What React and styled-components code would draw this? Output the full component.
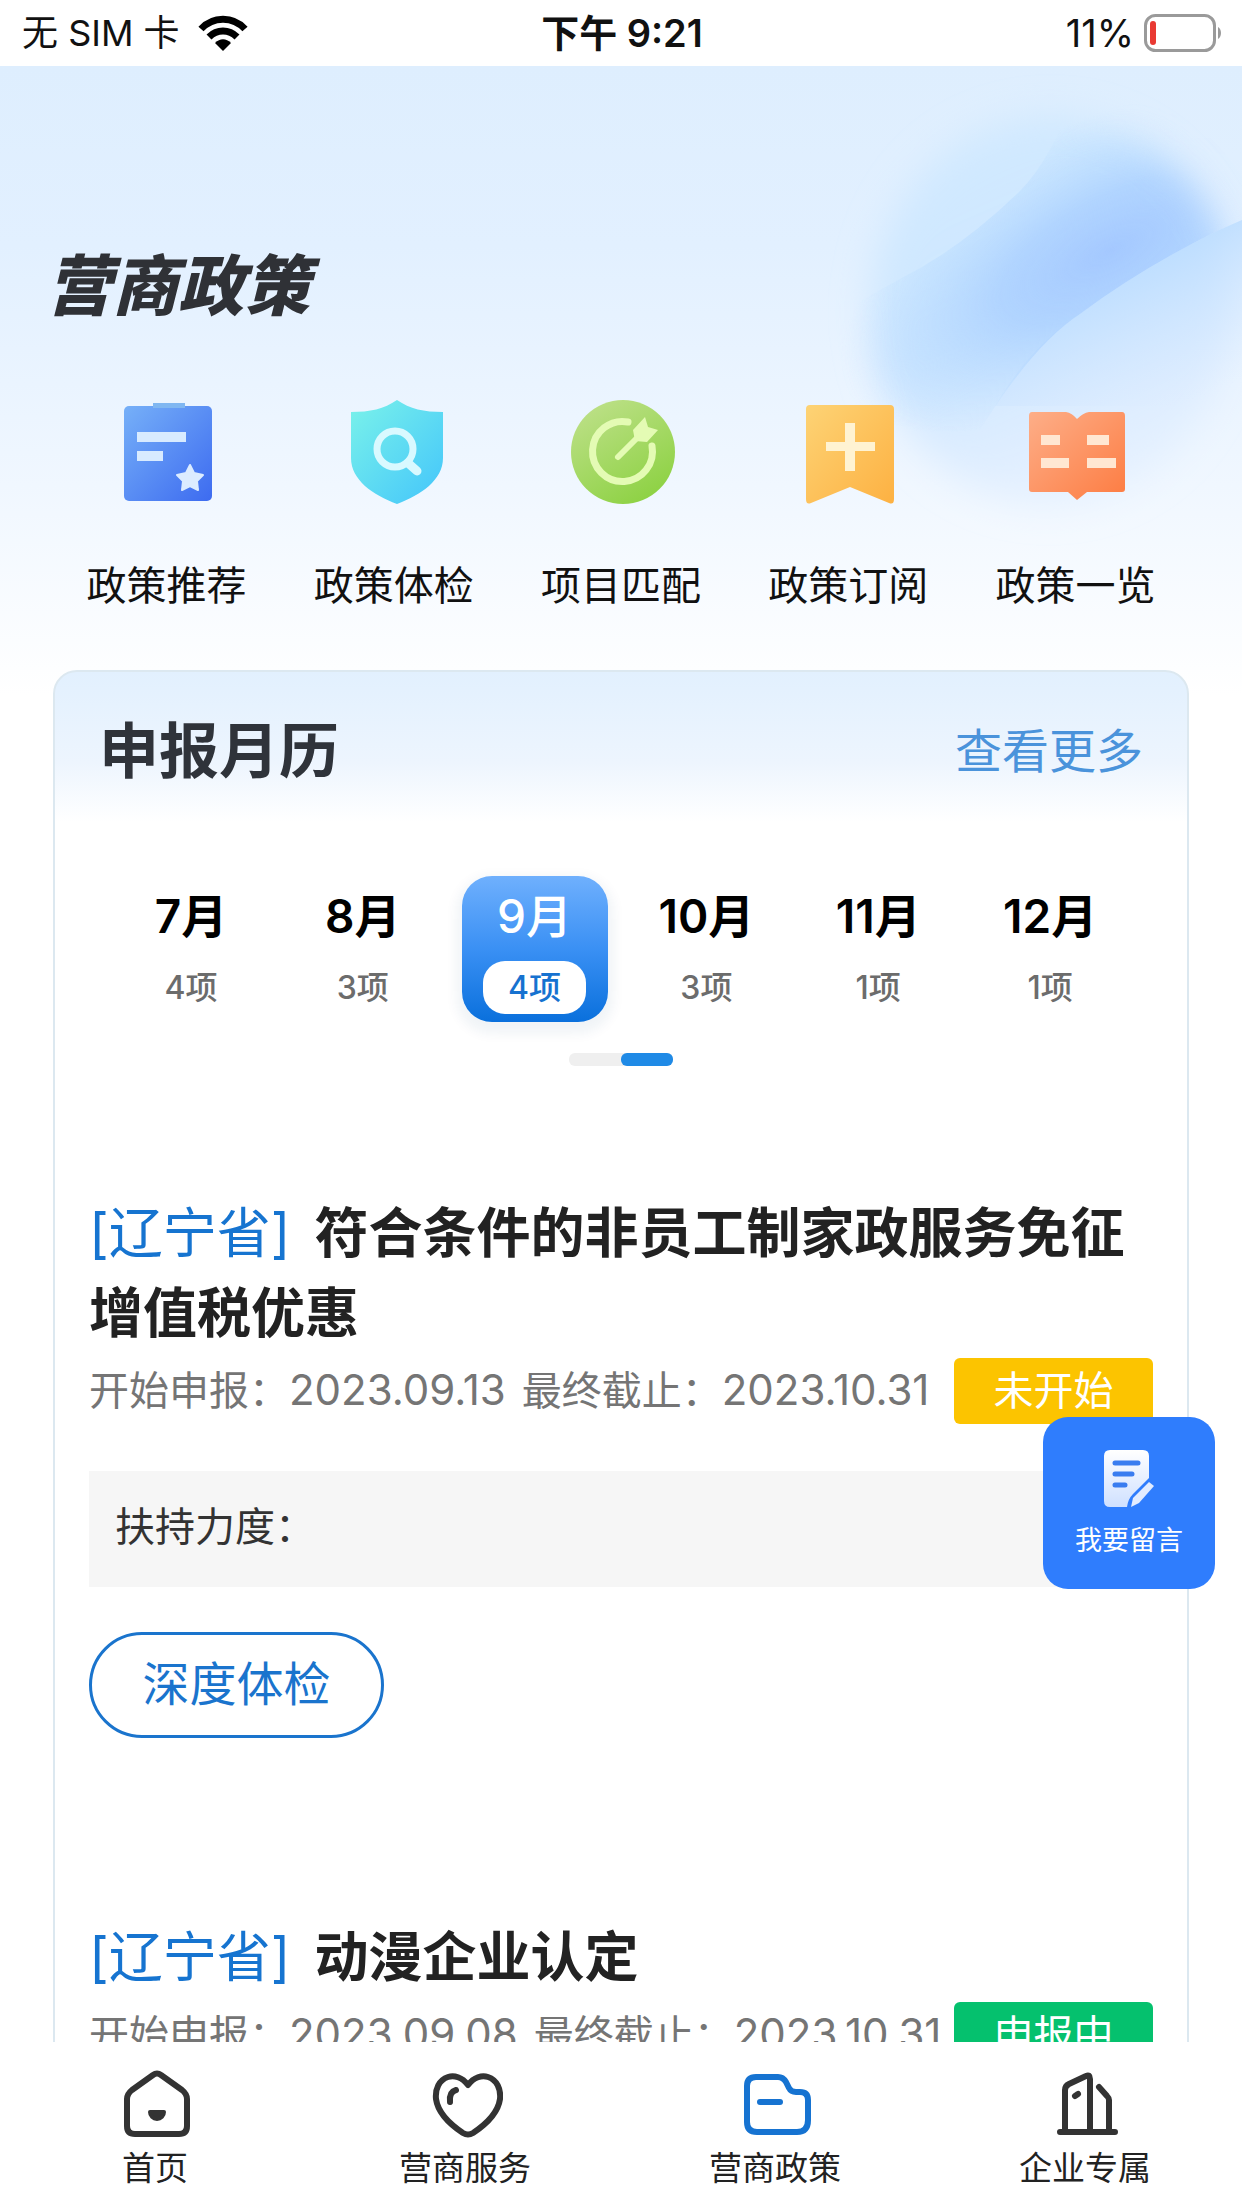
import React, { useState } from "react";
import styled, { createGlobalStyle } from "styled-components";

const GlobalStyle = createGlobalStyle`
  * {
    box-sizing: border-box;
  }

  body {
    margin: 0;
    background: #fff;
    font-family: Inter, "Noto Sans CJK SC", sans-serif;
    color: #111;
  }

  button {
    padding: 0;
    border: none;
    background: none;
    font-family: inherit;
    color: inherit;
    cursor: pointer;
  }

  a {
    color: inherit;
    text-decoration: none;
  }
`;

const Page = styled.div`
  height: 100vh;
  display: flex;
  flex-direction: column;
  overflow: hidden;
`;

/* 상태 표시줄 */
const StatusBar = styled.header`
  flex: none;
  height: 66px;
  padding: 0 20px 0 22px;
  display: grid;
  grid-template-columns: 1fr auto 1fr;
  align-items: center;
  background: #fff;
  font-size: 38px;
  line-height: 66px;
`;

const StatusSide = styled.div`
  display: flex;
  align-items: center;
  justify-content: ${(props) => (props.$end ? "flex-end" : "flex-start")};
  gap: ${(props) => (props.$end ? "10px" : "18px")};
`;

const Carrier = styled.span`
  font-size: 36px;
`;

const StatusTime = styled.div`
  font-weight: 600;
`;

const Content = styled.main`
  flex: 1;
  min-height: 0;
  overflow-y: auto;
  position: relative;
  background: linear-gradient(
    180deg,
    #deeefe 0px,
    #e2f0ff 180px,
    #f0f7ff 420px,
    #ffffff 630px
  );
  scrollbar-width: none;
`;

const HeroArt = styled.svg`
  position: absolute;
  top: 0;
  right: 0;
  width: 462px;
  height: 560px;
  pointer-events: none;
`;

const PageTitle = styled.h1`
  position: relative;
  margin: 0;
  padding: 170px 46px 0;
  font-size: 66px;
  line-height: 100px;
  font-weight: 900;
  font-style: italic;
  color: #2f3136;
`;

const Menu = styled.nav`
  position: relative;
  padding: 60px 53px 0;
  display: grid;
  grid-template-columns: repeat(5, 1fr);
`;

const MenuItem = styled.a`
  display: flex;
  flex-direction: column;
  align-items: center;
  gap: 48px;
  font-size: 40px;
  line-height: 60px;

  svg {
    width: 112px;
    height: 112px;
  }
`;

const Card = styled.section`
  position: relative;
  margin: 54px 53px 0;
  border: 2px solid #dce8f0;
  border-radius: 24px;
  background: linear-gradient(180deg, #e2f0fe 0px, #edf5fe 90px, #fff 150px);
`;

const CardHead = styled.div`
  padding: 31px 44px 1px;
  display: flex;
  justify-content: space-between;
  align-items: center;
`;

const CardTitle = styled.h2`
  margin: 0;
  font-size: 60px;
  line-height: 96px;
  font-weight: 600;
  color: #2f333a;
`;

const MoreLink = styled.a`
  font-size: 47px;
  line-height: 60px;
  color: #4a93db;
`;

const Months = styled.div`
  padding: 76px 51px 0 50px;
  display: grid;
  grid-template-columns: repeat(6, 1fr);
`;

const MonthButton = styled.button`
  justify-self: center;
  width: 146px;
  height: 146px;
  padding-top: 10px;
  border-radius: 30px;
  display: flex;
  flex-direction: column;
  align-items: center;
  gap: 14px;
  background: ${(props) =>
    props.$active
      ? "linear-gradient(180deg, #6fb0fd 0%, #3a90f4 50%, #0a70dc 100%)"
      : "transparent"};
  box-shadow: ${(props) =>
    props.$active ? "0 6px 12px 6px rgba(0, 60, 120, 0.06)" : "none"};
  color: ${(props) => (props.$active ? "#fff" : "#000")};
`;

const MonthName = styled.span`
  font-size: 46px;
  line-height: 61px;
  font-weight: ${(props) => (props.$active ? 500 : 600)};
`;

const MonthCount = styled.span`
  width: 103px;
  border-radius: 22px;
  font-size: 32px;
  line-height: 53px;
  font-weight: 500;
  background: ${(props) => (props.$active ? "#fff" : "transparent")};
  color: ${(props) => (props.$active ? "#1672d0" : "#6c6c6c")};
`;

const Indicator = styled.div`
  width: 104px;
  height: 13px;
  margin: 31px auto 0;
  display: flex;
  justify-content: flex-end;
  background: #efefef;
  border-radius: 6px;

  span {
    width: 52px;
    border-radius: 6px;
    background: #1f8ae6;
  }
`;

const PolicyList = styled.div`
  padding: 128px 34px 120px;
  display: flex;
  flex-direction: column;
  gap: 180px;
`;

const PolicyTitle = styled.h3`
  margin: 0;
  font-size: 54px;
  line-height: 80px;
  font-weight: 600;
  color: #222;
`;

const Region = styled.span`
  margin-right: 24px;
  font-weight: 400;
  color: #1674d0;
`;

const PolicyMeta = styled.div`
  margin-top: 3px;
  display: flex;
  align-items: center;
  justify-content: space-between;
  white-space: nowrap;
  font-size: 40px;
  line-height: 66px;
  color: #757575;
`;

const Dates = styled.div`
  display: flex;
  gap: 16px;
`;

const DateValue = styled.time`
  font-size: 42px;
`;

const StatusTag = styled.span`
  width: 199px;
  height: 66px;
  border-radius: 6px;
  text-align: center;
  color: #fff;
  background: ${(props) => (props.$open ? "#05c16e" : "#fcc400")};
`;

const Support = styled.div`
  margin-top: 47px;
  padding: 0 26px 4px;
  font-size: 40px;
  line-height: 112px;
  background: #f6f6f6;
  color: #333;
`;

const CheckButton = styled.button`
  margin-top: 45px;
  width: 295px;
  height: 106px;
  padding-bottom: 2px;
  border: 3px solid #1a74cd;
  border-radius: 53px;
  font-size: 47px;
  line-height: 60px;
  color: #1a74cd;
`;

const MessageButton = styled.button`
  position: fixed;
  right: 27px;
  bottom: 619px;
  width: 172px;
  height: 172px;
  border-radius: 25px;
  display: flex;
  flex-direction: column;
  align-items: center;
  padding-top: 32px;
  gap: 14px;
  background: #2f7dfd;
  color: #fff;
  font-size: 27px;
  line-height: 40px;
`;

const TabBar = styled.nav`
  flex: none;
  padding: 24px 2px 18px 0;
  display: grid;
  grid-template-columns: repeat(4, 1fr);
  background: #fff;
`;

const Tab = styled.a`
  display: flex;
  flex-direction: column;
  align-items: center;
  gap: 4px;
  font-size: 33px;
  line-height: 44px;
  color: #222;

  svg {
    width: 76px;
    height: 76px;
    fill: none;
    stroke: ${(props) => (props.$active ? "#1673d1" : "#333")};
    stroke-width: 6;
    stroke-linecap: round;
    stroke-linejoin: round;
  }
`;

const WifiIcon = () => (
  <svg width="50" height="36" viewBox="0 0 50 36" aria-hidden="true">
    <g fill="none" stroke="#000" strokeWidth="7">
      <path d="M3 14 C15 1 35 1 47 14" />
      <path d="M11 22 C19 14 31 14 39 22" />
    </g>
    <path d="M17 28 C22 23 28 23 33 28 L25 36 Z" />
  </svg>
);

const BatteryIcon = () => (
  <svg width="78" height="38" viewBox="0 0 78 38" aria-hidden="true">
    <rect x="1.5" y="1.5" width="69" height="35" rx="10" fill="#fff" stroke="#9a9a9a" strokeWidth="3" />
    <rect x="6" y="7" width="6" height="24" rx="3" fill="#e93a33" />
    <path d="M74 13 C78 15 78 23 74 25 Z" fill="#9a9a9a" />
  </svg>
);

const HeroOrb = () => (
  <HeroArt viewBox="0 0 462 560" aria-hidden="true">
    <defs>
      <filter id="soft" x="-30%" y="-30%" width="160%" height="160%">
        <feGaussianBlur stdDeviation="18" />
      </filter>
      <linearGradient id="orb" x1="0.3" y1="0" x2="0.7" y2="1">
        <stop offset="0" stopColor="#cbe7ff" stopOpacity="0.7" />
        <stop offset="0.5" stopColor="#c8e4ff" stopOpacity="0.8" />
        <stop offset="1" stopColor="#d8e8ff" stopOpacity="0.3" />
      </linearGradient>
      <radialGradient
        id="glow"
        gradientUnits="userSpaceOnUse"
        cx="0"
        cy="0"
        r="1"
        gradientTransform="translate(330 185) rotate(-28) scale(300 130)"
      >
        <stop offset="0" stopColor="#a4c8ff" />
        <stop offset="0.4" stopColor="#a9cfff" stopOpacity="0.8" />
        <stop offset="1" stopColor="#b5dcff" stopOpacity="0" />
      </radialGradient>
      <linearGradient id="lower" gradientUnits="userSpaceOnUse" x1="340" y1="200" x2="400" y2="340">
        <stop offset="0" stopColor="#b8dbff" stopOpacity="0.8" />
        <stop offset="1" stopColor="#d8e8ff" stopOpacity="0" />
      </linearGradient>
      <mask id="round" maskUnits="userSpaceOnUse" x="0" y="0" width="462" height="560">
        <ellipse cx="268" cy="255" rx="190" ry="205" fill="#fff" filter="url(#soft)" />
      </mask>
      <clipPath id="band">
        <path d="M300 20 Q270 95 240 125 Q180 183 120 213 Q70 240 20 270 L20 420 L190 380 Q250 280 300 248 Q360 203 437 165 L462 154 V20 Z" />
      </clipPath>
    </defs>
    <ellipse cx="270" cy="245" rx="180" ry="195" fill="url(#orb)" filter="url(#soft)" />
    <path d="M215 340 Q250 280 300 248 Q360 203 437 165 L462 154 V340 Z" fill="url(#lower)" />
    <g mask="url(#round)">
      <rect width="462" height="560" fill="url(#glow)" clipPath="url(#band)" />
    </g>
  </HeroArt>
);

const RecommendIcon = () => (
  <svg viewBox="0 0 112 112" aria-hidden="true">
    <defs>
      <linearGradient id="recommend" x1="0" y1="0" x2="1" y2="1">
        <stop offset="0" stopColor="#76b0f8" />
        <stop offset="1" stopColor="#3d6bf0" />
      </linearGradient>
    </defs>
    <rect x="13" y="10" width="88" height="95" rx="5" fill="url(#recommend)" />
    <path d="M42 7 H74 V12 H42 Z" fill="#80b7f1" />
    <path d="M26 36 H75 V46 H26 Z M26 55 H52 V65 H26 Z" fill="#d8ebff" />
    <path
      d="M79 69 L83 77 L92 79 L86 85 L87 94 L79 90 L71 94 L72 85 L66 79 L75 77 Z"
      fill="#dcecff"
      stroke="#dcecff"
      strokeWidth="2"
      strokeLinejoin="round"
    />
  </svg>
);

const CheckupIcon = () => (
  <svg viewBox="0 0 112 112" aria-hidden="true">
    <defs>
      <linearGradient id="checkup" x1="0" y1="0" x2="1" y2="1">
        <stop offset="0" stopColor="#7af2ea" />
        <stop offset="1" stopColor="#43c5fb" />
      </linearGradient>
    </defs>
    <path
      d="M59 4 C72 13 86 16 105 16 V62 C105 84 83 99 59 108 C35 99 13 84 13 62 V16 C32 16 46 13 59 4 Z"
      fill="url(#checkup)"
    />
    <circle cx="57" cy="53" r="18" fill="none" stroke="#d9f9ff" strokeWidth="7" />
    <path d="M70 67 L79 75" stroke="#d9f9ff" strokeWidth="9" strokeLinecap="round" />
  </svg>
);

const MatchIcon = () => (
  <svg viewBox="0 0 112 112" aria-hidden="true">
    <defs>
      <linearGradient id="match" x1="0.2" y1="0" x2="0.8" y2="1">
        <stop offset="0" stopColor="#bde088" />
        <stop offset="1" stopColor="#8bd140" />
      </linearGradient>
    </defs>
    <circle cx="58" cy="56" r="52" fill="url(#match)" />
    <path
      d="M63 26 A30 30 0 1 0 87 50"
      fill="none"
      stroke="#e4fbb4"
      strokeWidth="7"
      strokeLinecap="round"
    />
    <path d="M53 61 L76 38" stroke="#e4fbb4" strokeWidth="6" strokeLinecap="round" />
    <path d="M68 34 L80 21 L83 31 L93 34 L82 46 L70 45 Z" fill="#e4fbb4" />
  </svg>
);

const SubscribeIcon = () => (
  <svg viewBox="0 0 112 112" aria-hidden="true">
    <defs>
      <linearGradient id="subscribe" x1="0" y1="0" x2="1" y2="1">
        <stop offset="0" stopColor="#fdd375" />
        <stop offset="1" stopColor="#fdb142" />
      </linearGradient>
    </defs>
    <path
      d="M18 9 H98 Q102 9 102 13 V103 Q102 109 97 107 L58 91 L19 107 Q14 109 14 103 V13 Q14 9 18 9 Z"
      fill="url(#subscribe)"
    />
    <path d="M53 27 H63 V46 H83 V55 H63 V75 H53 V55 H34 V46 H53 Z" fill="#fff3d2" />
  </svg>
);

const OverviewIcon = () => (
  <svg viewBox="0 0 112 112" aria-hidden="true">
    <defs>
      <linearGradient id="overview" x1="0" y1="0" x2="1" y2="1">
        <stop offset="0" stopColor="#fdae88" />
        <stop offset="1" stopColor="#fd7c42" />
      </linearGradient>
    </defs>
    <path
      d="M13 16 H47 Q53 17 58 23 Q64 17 70 16 H103 Q106 16 106 20 V93 Q106 96 103 96 H68 L58 104 L49 96 H13 Q10 96 10 93 V20 Q10 16 13 16 Z"
      fill="url(#overview)"
    />
    <path
      d="M22 39 H41 V49 H22 Z M68 39 H90 V49 H68 Z M22 62 H50 V72 H22 Z M68 62 H97 V72 H68 Z"
      fill="#ffe7d2"
    />
  </svg>
);

const HomeIcon = () => (
  <svg viewBox="0 0 76 76" aria-hidden="true">
    <path d="M36 9 Q40 6 44 9 L65 24 Q70 28 70 33 V60 Q70 68 62 68 H18 Q10 68 10 60 V33 Q10 28 15 24 Z" />
    <path d="M33 46 H47 A7 7 0 0 1 33 46 Z" fill="#333" strokeWidth="4" />
  </svg>
);

const HeartIcon = () => (
  <svg viewBox="0 0 76 76" aria-hidden="true">
    <path d="M41 19 C35 11 27 9 21 11 C12 14 8 23 9 33 C11 47 24 59 36 67 Q41 70 46 67 C58 59 71 47 73 33 C74 23 70 14 61 11 C55 9 47 11 41 19 Z" />
    <path d="M29 24 Q22 26 23 36" />
  </svg>
);

const FolderIcon = () => (
  <svg viewBox="0 0 76 76" aria-hidden="true">
    <path d="M19 11 H41 Q46 11 49 16 L52 22 Q54 26 59 26 H63 Q71 26 71 34 V54 Q71 66 60 66 H20 Q10 66 10 56 V20 Q10 11 19 11 Z" />
    <path d="M23 36 H43" />
  </svg>
);

const CompanyIcon = () => (
  <svg viewBox="0 0 76 76" aria-hidden="true">
    <path d="M13 66 H68 M18 65 V24 Q18 20 22 18 L39 10 Q43 8 43 13 V65 M62 65 V34 Q62 32 60 30 L52 21" />
    <path d="M28 30 L31 28" />
  </svg>
);

const MessageIcon = () => (
  <svg width="52" height="58" viewBox="0 0 52 58" aria-hidden="true">
    <defs>
      <linearGradient id="message" x1="0" y1="0" x2="0" y2="1">
        <stop offset="0" stopColor="#ffffff" />
        <stop offset="1" stopColor="#cfe0ff" />
      </linearGradient>
    </defs>
    <path
      d="M7 1 H40 Q46 1 46 7 V29 L30 45 Q25 50 24 58 H7 Q1 58 1 52 V7 Q1 1 7 1 Z"
      fill="url(#message)"
    />
    <path d="M46 33 L51 37 L36 54 L28 58 L30 49 Z" fill="#e2ecff" />
    <path d="M12 14 H35 M12 25 H29 M12 36 H22" stroke="#3a7df0" strokeWidth="5" strokeLinecap="round" />
  </svg>
);

const menuItems = [
  { name: "政策推荐", Icon: RecommendIcon },
  { name: "政策体检", Icon: CheckupIcon },
  { name: "项目匹配", Icon: MatchIcon },
  { name: "政策订阅", Icon: SubscribeIcon },
  { name: "政策一览", Icon: OverviewIcon },
];

const months = [
  { month: 7, count: 4 },
  { month: 8, count: 3 },
  { month: 9, count: 4 },
  { month: 10, count: 3 },
  { month: 11, count: 1 },
  { month: 12, count: 1 },
];

const policies = [
  {
    region: "辽宁省",
    title: "符合条件的非员工制家政服务免征增值税优惠",
    start: "2023.09.13",
    end: "2023.10.31",
    open: false,
  },
  {
    region: "辽宁省",
    title: "动漫企业认定",
    start: "2023.09.08",
    end: "2023.10.31",
    open: true,
  },
];

const tabs = [
  { name: "首页", Icon: HomeIcon },
  { name: "营商服务", Icon: HeartIcon },
  { name: "营商政策", Icon: FolderIcon },
  { name: "企业专属", Icon: CompanyIcon },
];

function App() {
  const [selected, setSelected] = useState(9);

  return (
    <Page lang="zh-CN">
      <GlobalStyle />
      <StatusBar>
        <StatusSide>
          <Carrier>无 SIM 卡</Carrier>
          <WifiIcon />
        </StatusSide>
        <StatusTime>下午 9:21</StatusTime>
        <StatusSide $end>
          <span>11%</span>
          <BatteryIcon />
        </StatusSide>
      </StatusBar>

      <Content>
        <HeroOrb />

        <PageTitle>营商政策</PageTitle>

        <Menu>
          {menuItems.map(({ name, Icon }) => (
            <MenuItem key={name} href="#">
              <Icon />
              {name}
            </MenuItem>
          ))}
        </Menu>

        <Card>
          <CardHead>
            <CardTitle>申报月历</CardTitle>
            <MoreLink href="#">查看更多</MoreLink>
          </CardHead>

          <Months>
            {months.map(({ month, count }) => (
              <MonthButton
                key={month}
                type="button"
                $active={month === selected}
                onClick={() => setSelected(month)}
              >
                <MonthName $active={month === selected}>{month}月</MonthName>
                <MonthCount $active={month === selected}>{count}项</MonthCount>
              </MonthButton>
            ))}
          </Months>
          <Indicator>
            <span />
          </Indicator>

          <PolicyList>
            {policies.map((policy) => (
              <article key={policy.title}>
                <PolicyTitle>
                  <Region>[{policy.region}]</Region>
                  {policy.title}
                </PolicyTitle>
                <PolicyMeta>
                  <Dates>
                    <span>
                      开始申报：<DateValue>{policy.start}</DateValue>
                    </span>
                    <span>
                      最终截止：<DateValue>{policy.end}</DateValue>
                    </span>
                  </Dates>
                  <StatusTag $open={policy.open}>
                    {policy.open ? "申报中" : "未开始"}
                  </StatusTag>
                </PolicyMeta>
                <Support>扶持力度：</Support>
                <CheckButton type="button">深度体检</CheckButton>
              </article>
            ))}
          </PolicyList>
        </Card>
      </Content>

      <MessageButton type="button">
        <MessageIcon />
        我要留言
      </MessageButton>

      <TabBar>
        {tabs.map(({ name, Icon }) => (
          <Tab key={name} href="#" $active={name === "营商政策"}>
            <Icon />
            {name}
          </Tab>
        ))}
      </TabBar>
    </Page>
  );
}

export default App;
